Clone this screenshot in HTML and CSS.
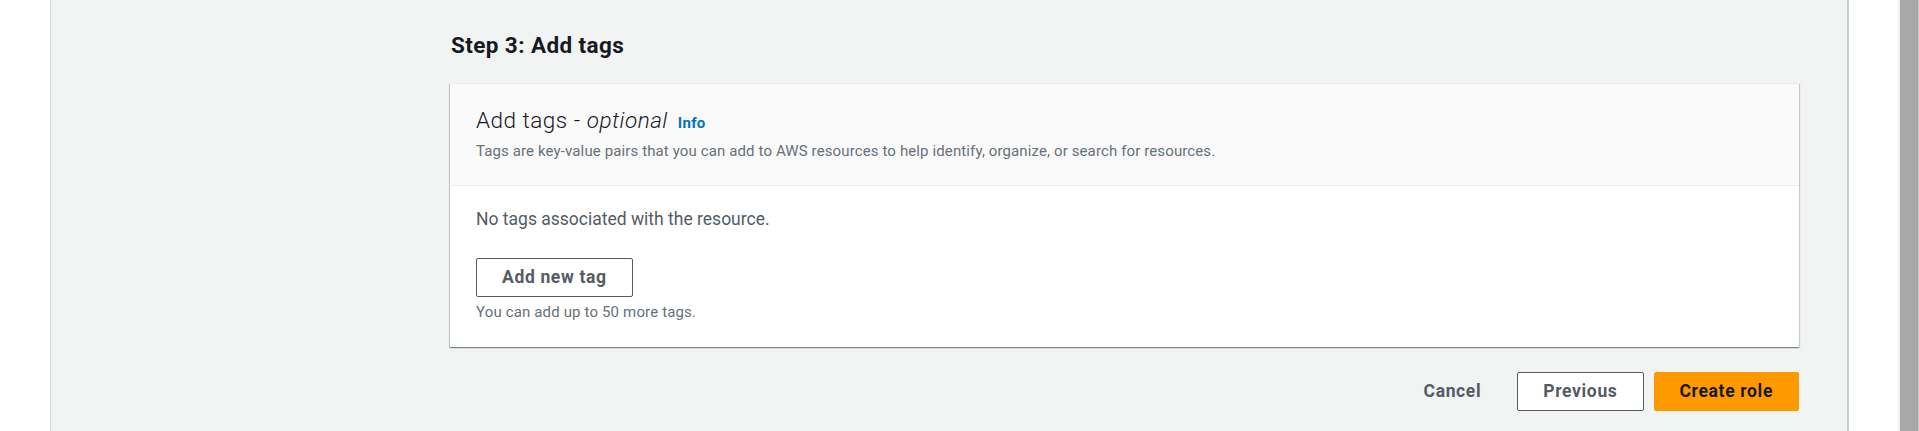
FILE: index.html
```html
<!DOCTYPE html>
<html lang="en">
<head>
<meta charset="utf-8">
<title>Step 3: Add tags</title>
<link rel="stylesheet" href="styles.css">
</head>
<body>
<div class="frame">
  <div class="gutter-left"></div>
  <main class="main">
    <div class="content">
      <h1 class="step-title">Step 3: Add tags</h1>
      <section class="card">
        <header class="card-header">
          <h2 class="card-title">Add tags - <i>optional</i> <a class="info" href="#">Info</a></h2>
          <p class="card-desc">Tags are key-value pairs that you can add to AWS resources to help identify, organize, or search for resources.</p>
        </header>
        <div class="card-body">
          <p class="empty">No tags associated with the resource.</p>
          <button class="btn btn-normal" type="button">Add new tag</button>
          <p class="hint">You can add up to 50 more tags.</p>
        </div>
      </section>
      <div class="actions">
        <button class="btn btn-link" type="button">Cancel</button>
        <button class="btn btn-normal" type="button">Previous</button>
        <button class="btn btn-primary" type="button">Create role</button>
      </div>
    </div>
  </main>
  <div class="gutter-right"></div>
  <div class="scrollbar"></div>
</div>
</body>
</html>
```

FILE: styles.css
```css
* { box-sizing: border-box; }
html, body { margin: 0; padding: 0; }
body {
  background: #ffffff;
  font-family: Roboto, "Liberation Sans", Arial, sans-serif;
  color: #16191f;
  overflow: hidden;
}
.frame {
  display: flex;
  height: 431px;
  width: 1919px;
}
.gutter-left {
  width: 50px;
  flex: none;
}
.main {
  width: 1799px;
  flex: none;
  background: #f2f3f3;
  border-left: 1px solid #d5dbdb;
  border-right: 2px solid #c9cfcf;
  padding: 31px 47px 0 399px;
}
.content {
  width: 1349px;
}
.gutter-right {
  width: 51px;
  flex: none;
  border-right: 2px solid #f0f0f0;
}
.scrollbar {
  width: 19px;
  flex: none;
  background: #a8a8a8;
  border-right: 1px solid #c4c4c4;
}
.step-title {
  margin: 0 0 24px 1px;
  font-size: 22.5px;
  line-height: 28px;
  font-weight: 700;
  letter-spacing: 0.4px;
  color: #16191f;
}
.card {
  background: #ffffff;
  box-shadow: 0 1px 1px 0 rgba(0, 28, 36, 0.3), 1px 1px 1px 0 rgba(0, 28, 36, 0.15), -1px 1px 1px 0 rgba(0, 28, 36, 0.15);
  border-top: 1px solid #eaeded;
}
.card-header {
  background: #fafafa;
  border-bottom: 1px solid #eaeded;
  padding: 22px 25px 24px 26px;
}
.card-title {
  margin: 0;
  font-size: 22.5px;
  line-height: 28px;
  font-weight: 300;
  letter-spacing: 0.5px;
  color: #16191f;
}
.card-title i { font-style: italic; }
.info {
  font-size: 15px;
  font-weight: 700;
  letter-spacing: 0.3px;
  color: #0073bb;
  text-decoration: none;
  margin-left: 4px;
}
.card-desc {
  margin: 4px 0 0;
  font-size: 15px;
  line-height: 20px;
  letter-spacing: 0.12px;
  color: #687078;
}
.card-body {
  padding: 22px 25px 25px 26px;
}
.empty {
  margin: 0;
  font-size: 17.5px;
  line-height: 22px;
  color: #545b64;
}
.btn {
  font-family: inherit;
  font-size: 17.5px;
  line-height: 23px;
  font-weight: 700;
  letter-spacing: 0.65px;
  padding: 7px 25px;
  border-radius: 2px;
  border: 1px solid transparent;
  cursor: pointer;
}
.btn-normal {
  background: #ffffff;
  border-color: #545b64;
  color: #545b64;
}
.card-body .btn-normal {
  margin-top: 28px;
  display: block;
}
.btn-link {
  background: transparent;
  color: #545b64;
}
.btn-primary {
  background: #ff9900;
  border-color: #ff9900;
  color: #16191f;
}
.hint {
  margin: 5px 0 0;
  font-size: 15px;
  line-height: 20px;
  letter-spacing: 0.15px;
  color: #687078;
}
.actions {
  display: flex;
  justify-content: flex-end;
  gap: 10px;
  margin-top: 25px;
}
```
